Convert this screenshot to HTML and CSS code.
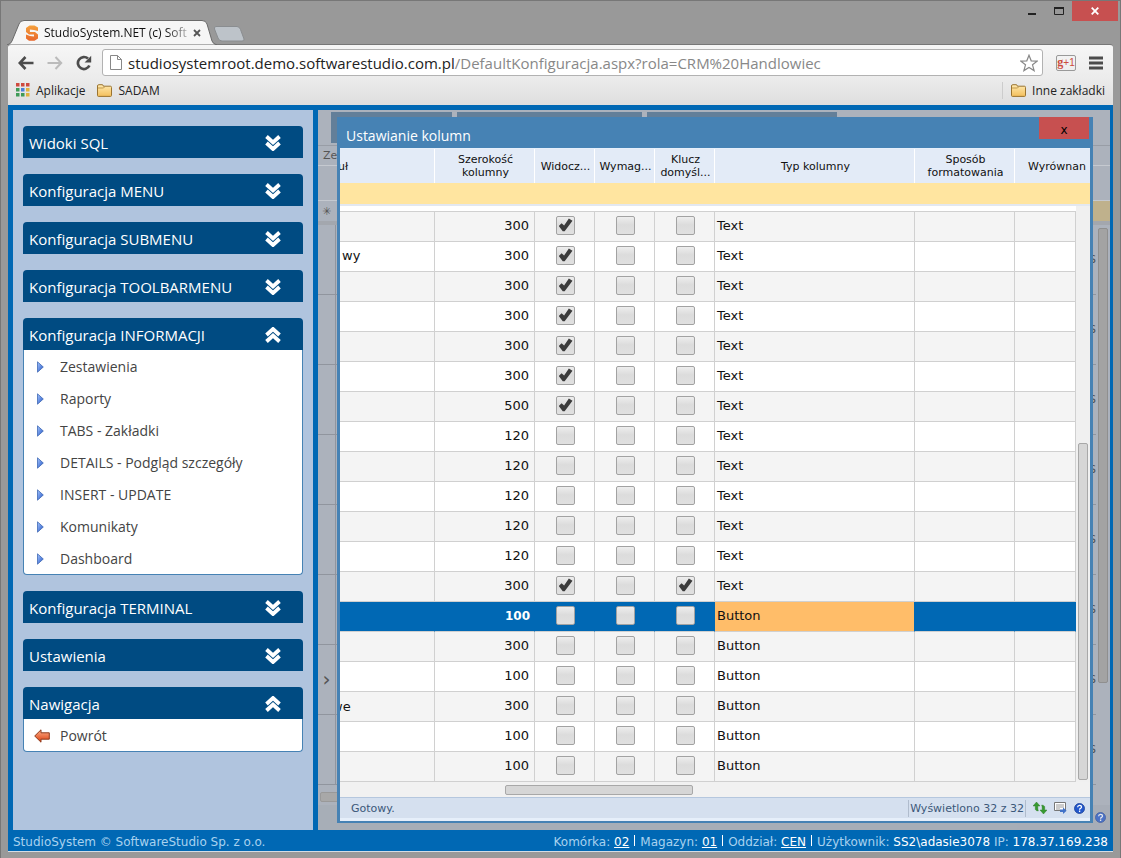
FILE: index.html
```
<!DOCTYPE html>
<html lang="pl">
<head>
  <meta charset="UTF-8" />
  <meta name="viewport" content="width=device-width, initial-scale=1.0">
  <title>StudioSystem.NET (c) SoftwareStudio</title>
  <link rel="stylesheet" href="styles.css">
</head>
<body>
  <svg width="0" height="0" class="defs" aria-hidden="true">
    <defs>
      <linearGradient id="blueGrad" x1="0" y1="0" x2="1" y2="1">
        <stop offset="0" stop-color="#a8c8ff" />
        <stop offset="1" stop-color="#1c50c4" />
      </linearGradient>
      <linearGradient id="folderGrad" x1="0" y1="0" x2="0" y2="1">
        <stop offset="0" stop-color="#ffeab0" />
        <stop offset="1" stop-color="#f3bf5c" />
      </linearGradient>
      <linearGradient id="redGrad" x1="0" y1="0" x2="0" y2="1">
        <stop offset="0" stop-color="#ffb08a" />
        <stop offset="1" stop-color="#d93c0c" />
      </linearGradient>
      <linearGradient id="logoGrad" x1="0" y1="0" x2="0" y2="1">
        <stop offset="0" stop-color="#f5a13c" />
        <stop offset="1" stop-color="#e8672c" />
      </linearGradient>
    </defs>
    <symbol id="chevrons" viewBox="0 0 16 16">
      <path d="M1.5 1.5 8 7.5l6.5-6M1.5 8 8 14l6.5-6" fill="none" stroke="#fff" stroke-width="3.8" />
    </symbol>
    <symbol id="bullet" viewBox="0 0 7 12">
      <path d="M.5.8v10.4L6.3 6z" fill="url(#blueGrad)" stroke="#3f68b4" stroke-width=".8" />
    </symbol>
    <symbol id="folder" viewBox="0 0 15 13">
      <path d="M.5 11.5v-9.5q0-1.3 1.3-1.3h3.4q1 0 1.2 1.5h7q1.1 0 1.1 1.2v8q0 1-1 1h-12q-1 0-1-.9z" fill="url(#folderGrad)" stroke="#9a7430" />
      <path d="M1 4h5.5l1-1" fill="none" stroke="#c2994c" />
    </symbol>
    <symbol id="help" viewBox="0 0 11 11">
      <circle cx="5.5" cy="5.5" r="5" fill="#2358cc" stroke="#1a3f96" stroke-width=".8" />
      <path d="M3.6 4.3q.1-1.9 2-1.9t1.9 1.7q0 .8-1 1.3-.9.4-.9 1.3M5.6 7.6v1.3" fill="none" stroke="#fff" stroke-width="1.3" />
    </symbol>
  </svg>

  <header class="browser">
    <div class="tabstrip">
      <div class="tab">
        <svg class="tab-shape" width="212" height="25" viewBox="0 0 212 25"><path d="M0 25q4-1 5-4L12 4q1-3.500 5-3.500h178q4 0 5 3.500l5 17q1 3 5 4z" fill="#f6f6f6" stroke="#6a6a6a" /></svg>
        <svg class="logo" width="12" height="16" viewBox="0 0 12 16"><path d="M12 2.500 8.500.5H3.500L0 3v4l3 2.500h5v2L4 11 0 9.500v4l3 2.300h5.500L12 13.500V9.500L9 7H3.900V4.500L8 5l4 1z" fill="url(#logoGrad)" /></svg>
        <span class="tab-title">StudioSystem.NET (c) Soft</span>
        <button class="tab-close" aria-label="Zamknij kartę"><svg width="8" height="8" viewBox="0 0 8 8"><path d="M1 1l6 6M7 1 1 7" stroke="#555" stroke-width="1.800" /></svg></button>
      </div>
      <button class="new-tab" aria-label="Nowa karta"><svg width="32" height="16" viewBox="0 0 32 16"><path d="M3 .5h21q2.500 0 3.500 3L31 13q.5 2-2 2H9q-3 0-4-3L1.500 3Q1 .5 3 .5z" fill="#bdc3c9" stroke="#8a8d90" /></svg></button>
      <div class="win-controls">
        <button aria-label="Minimalizuj"><svg width="10" height="8" viewBox="0 0 10 8"><path d="M1 7h8" stroke="#222" stroke-width="2" /></svg></button>
        <button aria-label="Maksymalizuj"><svg width="10" height="8" viewBox="0 0 10 8"><path d="M.5 1v6.500h9V1" fill="none" stroke="#222" /><path d="M0 1h10" stroke="#222" stroke-width="2" /></svg></button>
        <button class="win-close" aria-label="Zamknij"><svg width="8" height="8" viewBox="0 0 8 8"><path d="M.7.7l6.600 6.600M7.300.7.7 7.300" stroke="#fff" stroke-width="1.800" /></svg></button>
      </div>
    </div>

    <div class="toolbar">
      <button aria-label="Wstecz"><svg width="16" height="14" viewBox="0 0 16 14"><path d="M7.500 1 1.800 7l5.700 6M2 7h13.500" fill="none" stroke="#4c4c4c" stroke-width="2.600" /></svg></button>
      <button aria-label="Dalej"><svg width="16" height="14" viewBox="0 0 16 14"><path d="M8.500 1l5.700 6-5.700 6M14 7H.5" fill="none" stroke="#bbb" stroke-width="2" /></svg></button>
      <button aria-label="Odśwież"><svg width="16" height="16" viewBox="0 0 16 16"><path d="M13.400 10.500A6 6 0 1 1 12 3.600" fill="none" stroke="#4c4c4c" stroke-width="2.700" /><path d="M15.200.8v6.700H8.600z" fill="#4c4c4c" /></svg></button>
      <div class="omnibox">
        <svg width="12" height="15" viewBox="0 0 12 15"><path d="M.5.5h7l4 4v10H.5zM7.500.5v4h4" fill="#fff" stroke="#888" /></svg>
        <a class="url" href="#"><b>studiosystemroot.demo.softwarestudio.com.pl</b>/DefaultKonfiguracja.aspx?rola=CRM%20Handlowiec</a>
        <svg width="18" height="18" viewBox="0 0 18 18"><path d="M9 1.200l2.200 5.600 5.900.3-4.600 3.700 1.600 5.800L9 13.400l-5.100 3.200 1.600-5.800L.9 7.100l5.900-.3z" fill="#fff" stroke="#888" stroke-width="1.200" /></svg>
      </div>
      <button class="gplus" aria-label="Google +1"><span>g</span>+1</button>
      <button aria-label="Menu"><svg width="14" height="14" viewBox="0 0 14 14"><path d="M0 2h14M0 7h14M0 12h14" stroke="#4c4c4c" stroke-width="2.800" /></svg></button>
    </div>

    <nav class="bookmarks">
      <a href="#"><svg width="14" height="14" viewBox="0 0 14 14">
        <path d="M0 0h3.500v3.500H0zM5 0h3.500v3.500H5zM10 0h3.500v3.500H10z" fill="#cf4a3f" />
        <path d="M0 5h3.500v3.500H0zM0 10h3.500v3.500H0zM5 10h3.500v3.500H5z" fill="#3f9a57" />
        <path d="M5 5h3.500v3.500H5z" fill="#4a80d8" />
        <path d="M10 5h3.500v3.500H10zM10 10h3.500v3.500H10z" fill="#e0b23c" />
      </svg>Aplikacje</a>
      <a href="#"><svg width="15" height="13"><use href="#folder" /></svg>SADAM</a>
      <a class="other" href="#"><svg width="15" height="13"><use href="#folder" /></svg>Inne zakładki</a>
    </nav>
  </header>

  <div class="page">
    <div class="columns">
      <aside class="sidebar" id="sidebar"></aside>

      <main class="content">
        <div class="backdrop" aria-hidden="true">
          <div class="back-tabs"><i></i><i></i><i></i></div>
          <div class="back-head">Ze</div>
          <div class="back-filter"></div>
          <div class="back-new">✳</div>
          <div class="back-body">
            <div class="back-rows" id="backRows"></div>
            <div class="back-scroll"></div>
          </div>
          <div class="back-hscroll"></div>
          <div class="back-status"><svg width="11" height="11"><use href="#help" /></svg></div>
        </div>

        <section class="dialog">
          <div class="dialog-head">
            <h2>Ustawianie kolumn</h2>
            <button aria-label="Zamknij okno">x</button>
          </div>
          <table class="grid grid-head">
            <colgroup><col class="c-title"><col class="c-wide"><col class="c-tick"><col class="c-tick"><col class="c-tick"><col class="c-type"><col class="c-wide"><col></colgroup>
            <thead>
              <tr>
                <th class="scrolled">uł</th>
                <th>Szerokość kolumny</th>
                <th>Widocz...</th>
                <th>Wymag...</th>
                <th>Klucz domyśl...</th>
                <th>Typ kolumny</th>
                <th>Sposób formatowania</th>
                <th class="last">Wyrównan</th>
              </tr>
              <tr class="filter"><td colspan="8"></td></tr>
            </thead>
          </table>
          <div class="grid-scroll">
            <table class="grid grid-body">
              <colgroup><col class="c-title"><col class="c-wide"><col class="c-tick"><col class="c-tick"><col class="c-tick"><col class="c-type"><col class="c-wide"><col></colgroup>
              <tbody id="rows"></tbody>
            </table>
            <div class="vscroll"><div class="thumb"></div></div>
          </div>
          <div class="hscroll"><div class="thumb"></div></div>
          <div class="status">
            <span>Gotowy.</span>
            <span class="count">Wyświetlono 32 z 32</span>
            <button aria-label="Odśwież"><svg width="14" height="12" viewBox="0 0 14 12"><path d="M3.500 0 0 4h2.300v3.500q1 1.500 3 1.500-.6-1.500-.5-5H7zM10.500 12 14 8h-2.300V4.500q-1-1.500-3-1.500.6 1.500.5 5H7z" fill="#379a30" stroke="#23751f" stroke-width=".4" /></svg></button>
            <button aria-label="Eksport"><svg width="13" height="12" viewBox="0 0 13 12"><path d="M.5.5h11v8H.5z" fill="#fff" stroke="#777" /><path d="M2 3h8M2 5h8M2 7h4" stroke="#999" /><path d="M6 7.500h3V5.500L12.600 8.700 9 12v-2H6z" fill="#4273c8" /></svg></button>
            <button aria-label="Pomoc"><svg width="11" height="11"><use href="#help" /></svg></button>
          </div>
        </section>
      </main>
    </div>

    <footer class="footer">
      <span>StudioSystem © SoftwareStudio Sp. z o.o.</span>
      <span class="session">Komórka: <a href="#">02</a><i></i>Magazyn: <a href="#">01</a><i></i>Oddział: <a href="#">CEN</a><i></i>Użytkownik: <b>SS2\adasie3078</b> IP: <b>178.37.169.238</b></span>
    </footer>
  </div>

  <script>
    const menu = [
      { title: "Widoki SQL" },
      { title: "Konfiguracja MENU" },
      { title: "Konfiguracja SUBMENU" },
      { title: "Konfiguracja TOOLBARMENU" },
      { title: "Konfiguracja INFORMACJI", items: ["Zestawienia", "Raporty", "TABS - Zakładki", "DETAILS - Podgląd szczegóły", "INSERT - UPDATE", "Komunikaty", "Dashboard"] },
      { title: "Konfiguracja TERMINAL" },
      { title: "Ustawienia" },
      { title: "Nawigacja", items: ["Powrót"], back: true }
    ];

    // [title, width, visible, key, type]
    const columns = [
      ["", 300, 1, 0, "Text"],
      ["wy", 300, 1, 0, "Text"],
      ["", 300, 1, 0, "Text"],
      ["", 300, 1, 0, "Text"],
      ["", 300, 1, 0, "Text"],
      ["", 300, 1, 0, "Text"],
      ["", 500, 1, 0, "Text"],
      ["", 120, 0, 0, "Text"],
      ["", 120, 0, 0, "Text"],
      ["", 120, 0, 0, "Text"],
      ["", 120, 0, 0, "Text"],
      ["", 120, 0, 0, "Text"],
      ["", 300, 1, 1, "Text"],
      ["", 100, 0, 0, "Button"],
      ["", 300, 0, 0, "Button"],
      ["", 100, 0, 0, "Button"],
      ["we", 300, 0, 0, "Button"],
      ["", 100, 0, 0, "Button"],
      ["", 100, 0, 0, "Button"]
    ];
    const selected = 13;

    const arrow = `<svg width="16" height="14" viewBox="0 0 16 14"><path d="M.7 7 7 .8v3h8.300v6.400H7v3z" fill="url(#redGrad)" stroke="#8e3a1c" /></svg>`;
    const bullet = `<svg width="7" height="12"><use href="#bullet" /></svg>`;

    document.getElementById("sidebar").innerHTML = menu.map(group => `
      <section class="group ${group.items ? "open" : ""}">
        <button class="group-head">${group.title}<svg width="16" height="16"><use href="#chevrons" /></svg></button>
        ${group.items ? `<ul>${group.items.map(item => `
          <li><a href="#"><span class="mark">${group.back ? arrow : bullet}</span>${item}</a></li>`).join("")}</ul>` : ""}
      </section>`).join("");

    function tick(label, on) {
      return `<td class="tick"><input type="checkbox" aria-label="${label}" ${on ? "checked" : ""}></td>`;
    }

    document.getElementById("rows").innerHTML = columns.map((c, i) => `
      <tr class="${i === selected ? "selected" : ""}">
        <td class="${c[0] === "we" ? "scrolled" : ""}">${c[0]}</td>
        <td class="num">${c[1]}</td>
        ${tick("Widoczna", c[2])}${tick("Wymagana", 0)}${tick("Klucz domyślny", c[3])}
        <td class="type">${c[4]}</td><td></td><td></td>
      </tr>`).join("");

    document.getElementById("backRows").innerHTML = Array.from({ length: 8 }, (_, i) =>
      `<div class="back-row"><span>${i === 6 ? "›" : ""}</span>S</div>`).join("");
  </script>
</body>
</html>
```
FILE: styles.css
```
:root {
  --frame: #999;
  --blue: #0068b4;
  --navy: #004b82;
  --steel: #4682b4;
  --ui: "Open Sans", "Noto Sans", sans-serif;
  --grid: "DejaVu Sans", sans-serif;
}

* {
  box-sizing: border-box;
}

body {
  margin: 0;
  min-height: 100vh;
  display: flex;
  flex-direction: column;
  padding: 0 7px 6px;
  background: var(--frame);
  border: 1px solid #777;
  font-family: var(--ui);
}

button {
  padding: 0;
  border: 0;
  background: none;
  font: inherit;
  color: inherit;
  cursor: pointer;
  display: flex;
  align-items: center;
  justify-content: center;
}

a {
  color: inherit;
  text-decoration: none;
}

svg {
  display: block;
  flex: none;
}

.defs {
  position: absolute;
}

/* browser chrome */
.tabstrip {
  display: flex;
  height: 43px;
  align-items: flex-end;
}

.tab {
  position: relative;
  z-index: 1;
  width: 204px;
  height: 25px;
  display: flex;
  align-items: center;
  gap: 6px;
  padding: 2px 15px 0 18px;
}

.tab-shape {
  position: absolute;
  left: -1px;
  top: 1px;
}

.logo,
.tab-title,
.tab-close {
  position: relative;
}

.tab-title {
  flex: 1;
  font-size: 12px;
  color: #111;
  white-space: nowrap;
  mask-image: linear-gradient(90deg, #000 85%, rgba(0, 0, 0, .3));
}

.new-tab {
  margin: 0 0 2px 1px;
}

.win-controls {
  display: flex;
  align-self: flex-start;
  margin-left: auto;
  margin-right: -5px;
}

.win-controls button {
  width: 27px;
  height: 20px;
}

.win-controls .win-close {
  width: 46px;
  background: #c75050;
}

.toolbar {
  display: flex;
  align-items: center;
  gap: 13px;
  height: 36px;
  padding: 0 10px 0 10px;
  border-top: 1px solid #777;
  background: linear-gradient(#f6f6f6, #ebebeb);
  border-radius: 3px 3px 0 0;
}

.omnibox {
  flex: 1;
  min-width: 0;
  display: flex;
  align-items: center;
  gap: 6px;
  height: 27px;
  margin-left: -3px;
  padding: 0 0 0 7px;
  background: #fff;
  border: 1px solid #b2b2b2;
  border-radius: 3px;
}

.omnibox svg:last-child {
  margin-right: 4px;
}

.url {
  flex: 1;
  font-size: 15px;
  color: #888;
  white-space: nowrap;
  overflow: hidden;
}

.url b {
  font-weight: 400;
  color: #222;
}

.gplus {
  width: 20px;
  height: 16px;
  border: 1px solid #999;
  border-radius: 2px;
  font: 10px "Liberation Sans", sans-serif;
  color: #cc4b3c;
}

.gplus span {
  font: bold 12px "Liberation Serif", serif;
}

.bookmarks {
  display: flex;
  align-items: center;
  gap: 12px;
  height: 25px;
  padding: 0 8px 5px;
  font-size: 12px;
  color: #222;
  background: linear-gradient(#ebebeb, #dedede);
}

.bookmarks a {
  display: flex;
  align-items: center;
  gap: 6px;
}

.bookmarks .other {
  margin-left: auto;
  padding-left: 8px;
  border-left: 1px solid #ccc;
}

/* application */
.page {
  flex: 1;
  display: flex;
  flex-direction: column;
  padding: 5px 3px 0 5px;
  background: var(--blue);
  border-bottom: 1px solid #d5dde5;
}

.columns {
  flex: 1;
  display: flex;
  gap: 5px;
}

.sidebar {
  width: 300px;
  flex: none;
  display: flex;
  flex-direction: column;
  gap: 16px;
  padding: 16px 10px;
  background: #b0c4de;
}

.group-head {
  width: 100%;
  height: 32px;
  padding: 1px 22px 0 6px;
  justify-content: space-between;
  background: var(--navy);
  border-radius: 4px 4px 0 0;
  color: #fff;
  font-size: 15px;
}

.open .group-head svg {
  transform: scaleY(-1);
}

.group ul {
  margin: 0;
  padding: 0;
  list-style: none;
  background: #fff;
  border: 1px solid var(--steel);
  border-top: 0;
  border-radius: 0 0 4px 4px;
}

.group li a {
  display: flex;
  align-items: center;
  height: 32px;
  font-size: 14px;
  color: #444;
}

.mark {
  width: 36px;
  padding: 2px 0 0 10px;
}

.mark svg[width="7"] {
  margin-left: 3px;
}

.content {
  position: relative;
  flex: 1;
  min-width: 0;
  background: #acb2bc;
}

/* dimmed list under the dialog */
.backdrop {
  position: absolute;
  inset: 0;
  display: flex;
  flex-direction: column;
  overflow: hidden;
  font: 11px var(--grid);
  color: #555;
}

.back-tabs {
  display: flex;
  gap: 5px;
  height: 35px;
  padding: 2px 0 2px 13px;
}

.back-tabs i {
  width: 190px;
  background: #637f99;
}

.back-tabs i:nth-child(2) {
  width: 185px;
}

.back-tabs i:first-child {
  width: 121px;
}

.back-head {
  height: 21px;
  padding: 3px 5px;
  border-top: 1px solid #989da6;
  border-bottom: 1px solid #c5c9d0;
}

.back-filter {
  height: 35px;
  border-bottom: 1px solid #c5c9d0;
}

.back-new {
  height: 20px;
  padding: 4px 4px;
  background: linear-gradient(90deg, #acb2bc 60%, #bfb18c 60%);
}

.back-body {
  display: flex;
  flex: 1;
  border-top: 4px solid #a3a7ae;
}

.back-rows {
  flex: 1;
  overflow: hidden;
}

.back-row {
  display: flex;
  align-items: center;
  justify-content: space-between;
  height: 70px;
  border-bottom: 1px solid #90959e;
}

.back-row span {
  width: 18px;
  height: 69px;
  border-right: 1px solid #90959e;
  font-size: 20px;
  line-height: 69px;
  text-align: center;
}

.back-scroll {
  width: 10px;
  height: 455px;
  margin: 3px 2px;
  border: 1px solid #8f8f8f;
  border-radius: 2px;
  background: #a3a3a3;
}

.back-hscroll {
  width: 300px;
  height: 10px;
  margin: 3px 2px;
  border: 1px solid #999;
  border-radius: 2px;
  background: #a8a8a8;
}

.back-status {
  display: flex;
  justify-content: flex-end;
  align-items: center;
  height: 25px;
  padding-right: 4px;
  background: #a5acb5;
  opacity: .7;
}

/* dialog */
.dialog {
  position: relative;
  margin: 7px 17px 7px 19px;
  background: #e6effa;
  border: solid var(--steel);
  border-width: 0 3px 2px;
  font-family: var(--grid);
}

.dialog-head {
  display: flex;
  justify-content: space-between;
  align-items: flex-start;
  height: 31px;
  margin-bottom: 1px;
  background: var(--steel);
  color: #fff;
}

.dialog-head h2 {
  margin: 9px 0 0 6px;
  font: 14px/20px var(--ui);
}

.dialog-head button {
  width: 50px;
  height: 22px;
  margin-right: 1px;
  padding-top: 3px;
  background: #c75050;
  color: #000;
  font-size: 12px;
}

.grid {
  width: 100%;
  table-layout: fixed;
  border-collapse: separate;
  border-spacing: 0;
}

.c-title {
  width: 95px;
}

.c-wide {
  width: 100px;
}

.c-tick {
  width: 60px;
}

.c-type {
  width: 200px;
}

.grid th {
  height: 34px;
  padding: 0 0 0 2px;
  border-right: 1px solid #fff;
  background: #e3ebf7;
  font-size: 11px;
  font-weight: 400;
  line-height: 13px;
  color: #111;
  overflow: hidden;
}

.grid .last {
  padding-left: 13px;
  text-align: left;
  border-right: 0;
}

.grid .scrolled {
  padding: 0;
  text-align: left;
  text-indent: -2px;
}

.grid td.scrolled {
  text-indent: -8px;
}

.filter td {
  height: 21px;
  padding: 0;
  background: #ffe5a0;
}

.grid-scroll {
  display: flex;
  border-top: 2px solid #e3e8f0;
  background: #fff;
}

.grid-body {
  flex: 1;
  min-width: 0;
  padding-top: 5px;
  font-size: 13px;
  line-height: 16px;
  color: #111;
}

.grid-body td {
  height: 30px;
  padding: 0 2px 1px;
  border-right: 1px solid #d0d0d0;
  border-bottom: 1px solid #d0d0d0;
  overflow: hidden;
}

.grid-body tr:first-child td {
  height: 31px;
  border-top: 1px solid #d0d0d0;
}

.grid-body tr:nth-child(odd) {
  background: #f4f4f4;
}

.grid-body .num {
  padding-right: 5px;
  text-align: right;
}

.grid-body .tick {
  padding: 0 0 2px 1px;
  text-align: center;
}

.grid-body tr.selected {
  background: var(--blue);
  color: #fff;
}

.grid-body .selected td {
  border-right-color: var(--blue);
}

.grid-body .selected .num {
  padding-right: 4px;
  font-weight: 700;
  font-size: 12px;
}

.grid-body .selected .type {
  background: #ffbd69;
  color: #111;
}

.tick input {
  appearance: none;
  position: relative;
  display: inline-block;
  width: 19px;
  height: 19px;
  margin: 0;
  vertical-align: middle;
  border: 1px solid #a2a2a2;
  border-radius: 2px;
  background: linear-gradient(#eee, #dcdcdc 45%, #e0e0e0);
}

.tick input:checked::after {
  content: "";
  position: absolute;
  left: 2px;
  top: 1px;
  width: 14px;
  height: 14px;
  background: #3c3c3c;
  clip-path: polygon(2% 58%, 22% 38%, 40% 54%, 74% 4%, 100% 20%, 44% 94%, 30% 94%);
}

.vscroll {
  display: flex;
  flex-direction: column;
  justify-content: flex-end;
  width: 14px;
  padding: 2px;
  background: #f0f0f0;
}

.thumb {
  border: 1px solid #a8a8a8;
  border-radius: 2px;
  background: #d6d6d6;
}

.vscroll .thumb {
  height: 59%;
}

.hscroll {
  padding: 3px 0 2px;
  background: #f1f1f1;
}

.hscroll .thumb {
  width: 25%;
  height: 10px;
  margin-left: 22%;
}

.status {
  display: flex;
  align-items: center;
  gap: 7px;
  height: 21px;
  margin-bottom: 3px;
  padding: 0 5px 0 11px;
  border-top: 1px solid #b5c7de;
  background: #d5e0ef;
  font-size: 11px;
  color: #3c587a;
}

.count {
  margin-left: auto;
  padding: 2px 1px;
  border: solid #b0bccd;
  border-width: 0 1px;
}

.footer {
  display: flex;
  justify-content: space-between;
  align-items: center;
  height: 21px;
  padding: 3px 2px 0 0;
  font: 12px var(--grid);
  color: #a9d2ef;
}

.footer a,
.footer b {
  font-weight: 400;
  color: #fff;
}

.footer a {
  text-decoration: underline;
}

.session i {
  display: inline-block;
  width: 1px;
  height: 11px;
  margin: 0 5px;
  background: #fff;
}
```
